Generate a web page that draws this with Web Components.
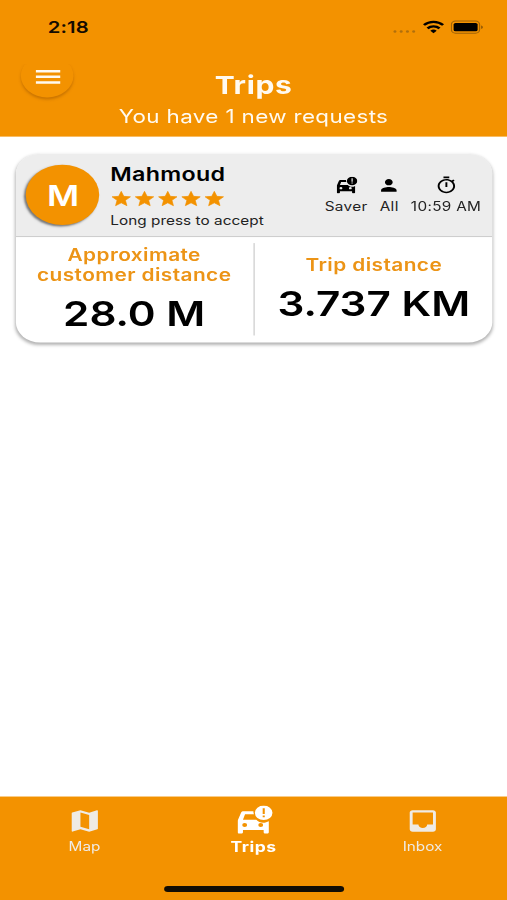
<!DOCTYPE html>
<html lang="en">
<head>
<meta charset="utf-8">
<title>Trips</title>
<style>
    html, body { margin: 0; height: 900px; overflow: hidden; background: #fff; }
</style>
</head>
<body>
<trips-screen></trips-screen>

<script>
const ICONS = {
    menu: '<path d="M3 18.4h18v-2.2H3v2.2zm0-5.1h18v-2.2H3v2.2zm0-7.3v2.2h18V6H3z"/>',
    star: '<path stroke="currentColor" stroke-width=".8" stroke-linejoin="round" d="M12 17.27L18.18 21l-1.64-7.03L22 9.24l-7.19-.61L12 2 9.19 8.63 2 9.24l5.46 4.73L5.82 21z"/>',
    person: '<path d="M12 12c2.21 0 4-1.79 4-4s-1.79-4-4-4-4 1.79-4 4 1.79 4 4 4zm0 2c-2.67 0-8 1.34-8 4v2h16v-2c0-2.66-5.33-4-8-4z"/>',
    timer: '<path d="M15 1H9v2h6V1zm-4 13h2V8h-2v6zm8.03-6.61l1.42-1.42c-.43-.51-.9-.99-1.41-1.41l-1.42 1.42C16.07 4.74 14.12 4 12 4c-4.97 0-9 4.03-9 9s4.02 9 9 9 9-4.03 9-9c0-2.12-.74-4.07-1.97-5.61zM12 20c-3.87 0-7-3.13-7-7s3.13-7 7-7 7 3.13 7 7-3.13 7-7 7z"/>',
    map: '<path d="M20.5 3l-.16.03L15 5.1 9 3 3.36 4.9c-.21.07-.36.25-.36.48V20.5c0 .28.22.5.5.5l.16-.03L9 18.9l6 2.1 5.64-1.9c.21-.07.36-.25.36-.48V3.5c0-.28-.22-.5-.5-.5zM15 19l-6-2.11V5l6 2.11V19z"/>',
    inbox: '<path d="M19 3H5c-1.1 0-2 .9-2 2v14c0 1.1.9 2 2 2h14c1.1 0 2-.9 2-2V5c0-1.1-.9-2-2-2zm0 12h-4c0 1.66-1.35 3-3 3s-3-1.34-3-3H5V5h14v10z"/>',
    // car with an alert badge over its top right corner
    car: '<g transform="scale(.8276)"><path fill-rule="evenodd" d="M4.9 5.6h8c0 1.2.2 2.2.5 3.1H6.1L4.4 14h10.9c1.4 1.9 3.4 3 5.6 3 1.7 0 3.3-.6 4.6-1.5v11c0 .8-.6 1.4-1.4 1.4h-1.400c-.8 0-1.400-.6-1.400-1.400v-2.100H4.400v2.100c0 .8-.6 1.400-1.400 1.400H1.400C.6 27.900 0 27.300 0 26.500V15.100L2.900 7C3.200 6.100 3.900 5.600 4.900 5.600zM5.800 21.300a2 2 0 1 0 0-4 2 2 0 0 0 0 4zM18.900 21.300a2 2 0 1 0 0-4 2 2 0 0 0 0 4z"/><path fill-rule="evenodd" d="M21.300 0a7.200 7.200 0 1 0 0 14.400 7.200 7.200 0 0 0 0-14.400zM20.500 2.700h1.700v5.700h-1.700zM20.500 9.800h1.700v1.700h-1.700z"/></g>'
};

class AppIcon extends HTMLElement {
    constructor() {
        super();
        this.attachShadow({mode: 'open'});
    }

    connectedCallback() {
        this.shadowRoot.innerHTML = `
            <style>
                :host { display: block; flex: none; width: var(--size, 24px); height: var(--size, 24px); }
                svg { display: block; width: 100%; height: 100%; fill: currentColor; }
            </style>
            <svg viewBox="0 0 24 24">${ICONS[this.getAttribute('name')]}</svg>`;
    }
}
customElements.define('app-icon', AppIcon);

// defines an element whose shadow root is a plain piece of markup
function define(name, html) {
    const template = document.createElement('template');
    template.innerHTML = html;
    customElements.define(name, class extends HTMLElement {
        constructor() {
            super();
            this.attachShadow({mode: 'open'});
            this.shadowRoot.appendChild(template.content.cloneNode(true));
        }
    });
}

define('status-bar', `
    <style>
        :host { display: flex; justify-content: space-between; height: 54px; padding: 0 18px 0 39px; color: #140c00; }
        .time { padding-top: 17px; font-size: 16.5px; line-height: 20px; font-weight: 600; letter-spacing: .1px; }
        .right { display: flex; padding-top: 20px; height: 14px; }
        .dots { width: 20px; height: 14px; margin-right: 4.2px; fill: #b06f0c; }
        .wifi { width: 18px; height: 14px; margin-right: 5.5px; }
        .battery { width: 28px; height: 14px; }
    </style>
    <div class="time">2:18</div>
    <div class="right">
        <svg class="dots" viewBox="0 0 20 14"><circle cx="2.5" cy="11.3" r="1.2"/><circle cx="7.6" cy="11.3" r="1.2"/><circle cx="12.7" cy="11.3" r="1.2"/><circle cx="17.8" cy="11.3" r="1.2"/></svg>
        <svg class="wifi" viewBox="0 0 18 14" fill="none" stroke="#000" stroke-width="2.3"><path d="M1.2 4.9a11.2 11.2 0 0 1 15.6 0M4.1 8.2a7 7 0 0 1 9.8 0"/><path d="M9 13.2l-2.6-2.6a3.8 3.8 0 0 1 5.2 0z" fill="#000" stroke="none"/></svg>
        <svg class="battery" viewBox="0 0 28 14"><rect x=".6" y="1" width="23" height="12" rx="3.4" fill="none" stroke="#9e6308"/><rect x="2.4" y="2.9" width="19.6" height="8.2" rx="1.6" fill="#000"/><path d="M25 5.3v3.4c1.6-.4 1.6-3 0-3.4z" fill="#7a4b05"/></svg>
    </div>
`);

define('app-header', `
    <style>
        :host { display: block; height: 136px; background: #f39200; color: #fffaf0; }
        .row { display: flex; padding: 0 17.3px; }
        .menu { display: flex; align-items: center; justify-content: center; width: 43px; height: 43px; border-radius: 50%; background: #f39200; box-shadow: 0 2px 2.5px rgba(120, 60, 0, .34); clip-path: inset(10px -6px -8px -6px); --size: 26.5px; }
        app-icon { margin-top: 1px; }
        .titles { flex: 1; padding: 17px 43px 0 0; margin: 0 -20px; text-align: center; white-space: nowrap; }
        h1 { margin: 0; font-size: 24.5px; line-height: 28px; font-weight: 700; letter-spacing: .5px; }
        p { margin: 3px 0 0; font-size: 18.3px; line-height: 26px; letter-spacing: .3px; }
    </style>
    <status-bar></status-bar>
    <div class="row">
        <div class="menu"><app-icon name="menu"></app-icon></div>
        <div class="titles">
            <h1><slot name="title"></slot></h1>
            <p><slot></slot></p>
        </div>
    </div>
`);

define('trip-tag', `
    <style>
        :host { display: flex; flex-direction: column; align-items: center; gap: 4.5px; color: #000; --size: 19px; }
        .icon { display: flex; align-items: center; height: 17.5px; }
        span { font-size: 12.5px; line-height: 16px; letter-spacing: .27px; color: #222; white-space: nowrap; }
    </style>
    <div class="icon"><slot name="icon"></slot></div>
    <span><slot></slot></span>
`);

define('trip-metric', `
    <style>
        :host { display: flex; flex: 1; flex-direction: column; align-items: center; justify-content: center; padding: 2.5px 0 0 .8px; text-align: center; white-space: nowrap; }
        .label { font-size: 17px; line-height: 20px; font-weight: 600; letter-spacing: .35px; color: #ec9416; }
        .value { margin-top: 6px; font-size: 34.5px; line-height: 46px; font-weight: 600; color: #000; }
    </style>
    <div class="label"><slot name="label"></slot></div>
    <div class="value"><slot></slot></div>
`);

define('trip-card', `
    <style>
        :host { display: block; margin: 17px 12.5px 0; border-radius: 20px; background: #fff; box-shadow: 0 2px 3px rgba(0, 0, 0, .3); overflow: hidden; }
        .head { display: flex; height: 82px; background: #ededed; border-bottom: 1px solid #ccc; }
        .avatar { display: flex; align-items: center; justify-content: center; width: 60px; height: 60px; margin: 11px 8.7px 0 8.8px; border-radius: 50%; background: #f39200; box-shadow: -1.5px 1.5px 2px rgba(0, 0, 0, .5); color: #fff; font-size: 28.5px; font-weight: 600; text-indent: .6px; }
        .who { flex: 1; padding-top: 9px; white-space: nowrap; }
        .name { font-size: 19px; line-height: 24px; font-weight: 600; letter-spacing: .25px; color: #000; }
        .stars { display: flex; gap: 1px; margin: 3px 0; color: #f39200; --size: 18px; }
        .hint { font-size: 12.5px; line-height: 18px; letter-spacing: .04px; margin-top: 4px; color: #222; }
        .tags { display: flex; gap: 8.2px; padding: 23px 8.5px 0 0; }
        .body { display: flex; height: 105px; }
        .rule { width: 1.5px; height: 92px; margin: 6px 0 0 .8px; background: #ccc; }
    </style>
    <div class="head">
        <div class="avatar"><slot name="initial"></slot></div>
        <div class="who">
            <div class="name"><slot name="name"></slot></div>
            <div class="stars">
                <app-icon name="star"></app-icon><app-icon name="star"></app-icon><app-icon name="star"></app-icon><app-icon name="star"></app-icon><app-icon name="star"></app-icon>
            </div>
            <div class="hint">Long press to accept</div>
        </div>
        <div class="tags"><slot name="tags"></slot></div>
    </div>
    <div class="body">
        <slot name="pickup"></slot>
        <div class="rule"></div>
        <slot name="trip"></slot>
    </div>
`);

define('nav-item', `
    <style>
        :host { display: flex; flex: 1; flex-direction: column; align-items: center; color: #efebe5; --size: 28.5px; }
        :host([active]) { color: #fff; --size: 29px; }
        .icon { display: flex; align-items: center; height: 32px; }
        span { margin-top: 1px; font-size: 12.5px; line-height: 18px; }
        :host([active]) span { font-size: 14.3px; font-weight: 700; letter-spacing: .4px; }
    </style>
    <div class="icon"><slot name="icon"></slot></div>
    <span><slot></slot></span>
`);

define('bottom-nav', `
    <style>
        :host { display: flex; flex-direction: column; justify-content: space-between; height: 102.6px; background: #f39200; }
        .items { display: flex; padding-top: 8px; }
        .home { width: 147px; height: 5.5px; margin: 0 auto 8.5px; border-radius: 3px; background: #120d04; }
    </style>
    <div class="items"><slot></slot></div>
    <div class="home"></div>
`);

// laid out on a 414x896 device screen, stretched to the window
define('trips-screen', `
    <style>
        :host { display: flex; flex-direction: column; width: 414px; height: 896px; transform: scale(1.22464, 1.00446); transform-origin: 0 0; background: #fff; font-family: Inter, "Liberation Sans", sans-serif; }
        main { flex: 1; }
        trip-tag app-icon[name="car"] { --size: 17px; margin: 0 0 1px 1px; }
        nav-item app-icon[name="car"] { margin: 0 0 2px 3px; }
    </style>
    <app-header>
        <span slot="title">Trips</span>
        You have 1 new requests
    </app-header>
    <main>
        <trip-card>
            <span slot="initial">M</span>
            <span slot="name">Mahmoud</span>
            <trip-tag slot="tags"><app-icon slot="icon" name="car"></app-icon>Saver</trip-tag>
            <trip-tag slot="tags"><app-icon slot="icon" name="person"></app-icon>All</trip-tag>
            <trip-tag slot="tags"><app-icon slot="icon" name="timer"></app-icon>10:59 AM</trip-tag>
            <trip-metric slot="pickup"><span slot="label">Approximate<br>customer distance</span>28.0 M</trip-metric>
            <trip-metric slot="trip"><span slot="label">Trip distance</span>3.737 KM</trip-metric>
        </trip-card>
    </main>
    <bottom-nav>
        <nav-item><app-icon slot="icon" name="map"></app-icon>Map</nav-item>
        <nav-item active><app-icon slot="icon" name="car"></app-icon>Trips</nav-item>
        <nav-item><app-icon slot="icon" name="inbox"></app-icon>Inbox</nav-item>
    </bottom-nav>
`);
</script>
</body>
</html>
